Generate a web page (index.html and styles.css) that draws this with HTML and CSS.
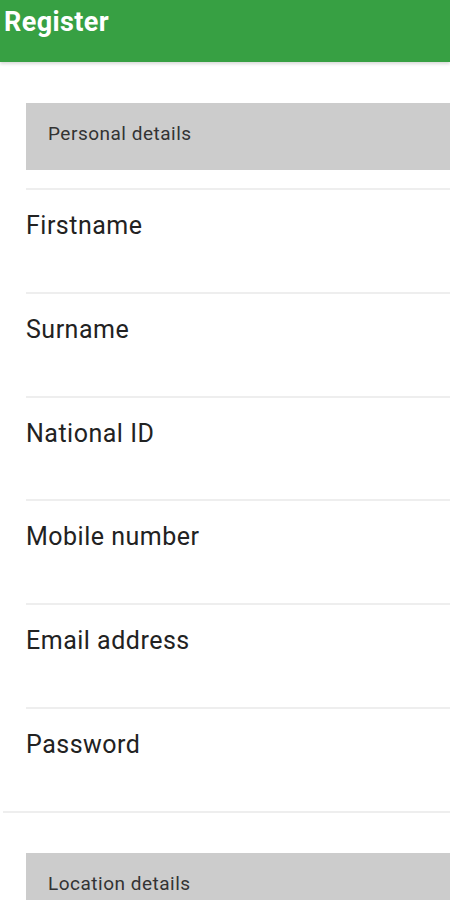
FILE: index.html
```html
<!DOCTYPE html>
<html>
<head>
<title>Register</title>
<link rel="stylesheet" href="styles.css">
</head>
<body>
<div class="appbar"><h1>Register</h1></div>
<div class="content">
  <div class="section-title">Personal details</div>
  <div class="fields">
    <div class="field">Firstname</div>
    <div class="field">Surname</div>
    <div class="field">National ID</div>
    <div class="field">Mobile number</div>
    <div class="field">Email address</div>
    <div class="field">Password</div>
  </div>
  <div class="divider"></div>
  <div class="section-title">Location details</div>
</div>
</body>
</html>
```

FILE: styles.css
```css
body {
  margin: 0;
  font-family: Roboto, "Noto Sans", sans-serif;
  background-color: #ffffff;
  overflow: hidden;
}
.appbar {
  height: 62px;
  background-color: #37a043;
  box-shadow: 0 2px 3px rgba(0, 0, 0, 0.15);
  display: flex;
  align-items: flex-start;
}
.appbar h1 {
  margin: 0;
  padding: 5px 0 0 4px;
  color: #ffffff;
  font-size: 27px;
  letter-spacing: 0.4px;
  font-weight: 700;
  line-height: 34px;
}
.content {
  display: flex;
  flex-direction: column;
}
.section-title {
  margin: 41px 0 0 26px;
  height: 67px;
  background-color: #cccccc;
  color: #333333;
  font-size: 19px;
  letter-spacing: 0.5px;
  line-height: 22px;
  padding: 20px 0 0 22px;
  box-sizing: border-box;
}
.fields {
  margin: 18px 0 0 26px;
  display: flex;
  flex-direction: column;
}
.field {
  height: 103.8px;
  box-sizing: border-box;
  border-top: 2px solid #eeeeee;
  padding-top: 21px;
  font-size: 25px;
  letter-spacing: 0.5px;
  line-height: 30px;
  color: #222222;
}
.divider {
  margin-left: 3px;
  border-top: 2px solid #eeeeee;
}
.content .divider + .section-title {
  margin-top: 40px;
}
```
